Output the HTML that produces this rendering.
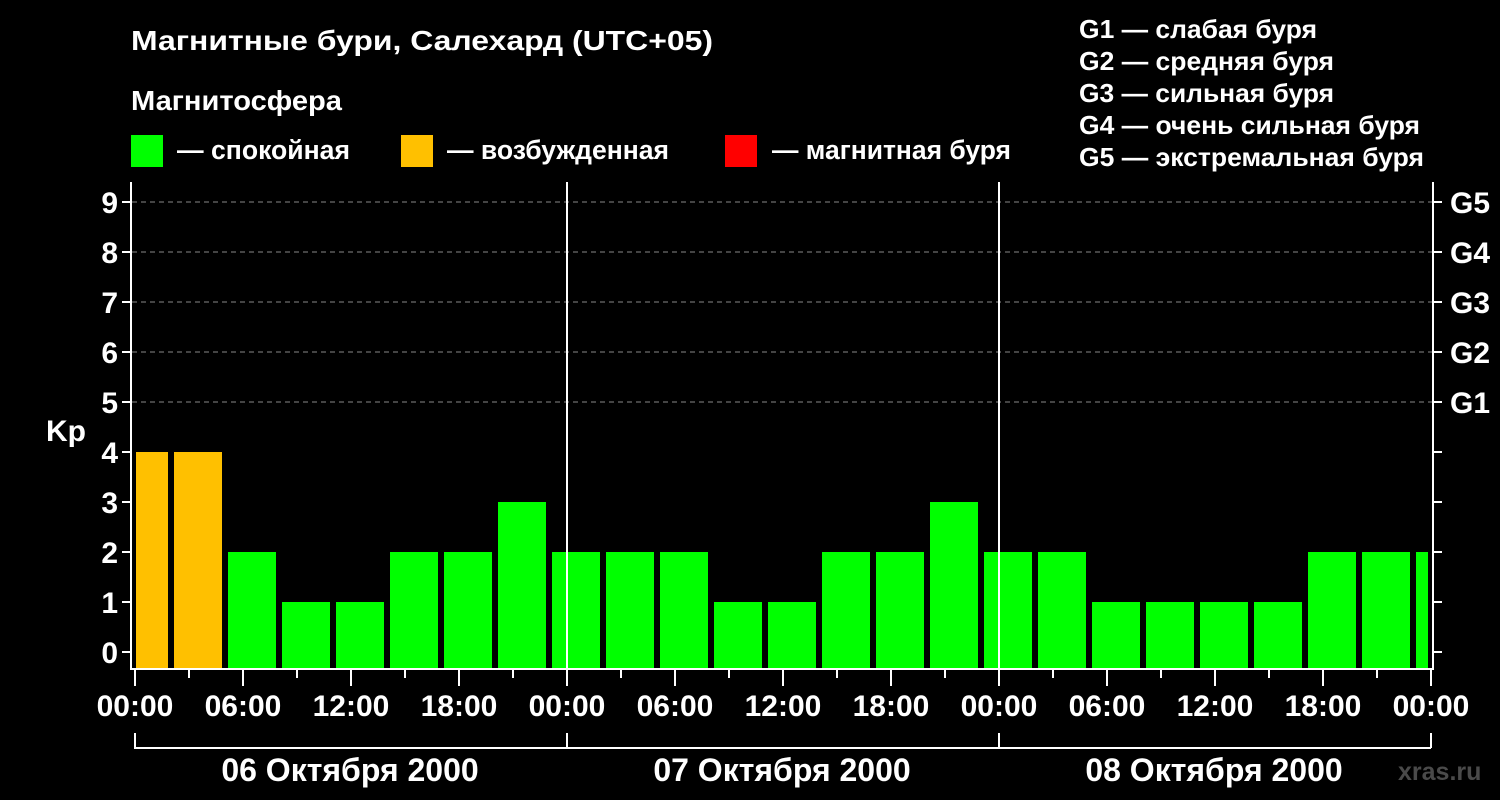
<!DOCTYPE html>
<html><head><meta charset="utf-8"><style>
html,body{margin:0;padding:0;background:#000;}
svg{display:block;font-family:"Liberation Sans",sans-serif;font-weight:bold;}
</style></head><body>
<svg width="1500" height="800" viewBox="0 0 1500 800" xmlns="http://www.w3.org/2000/svg">
<rect width="1500" height="800" fill="#000"/>
<g fill="#fff" font-size="28">
<text x="131" y="50" textLength="582" lengthAdjust="spacingAndGlyphs">Магнитные бури, Салехард (UTC+05)</text>
<text x="131" y="110" textLength="211" lengthAdjust="spacingAndGlyphs">Магнитосфера</text>
</g>
<g fill="#fff" font-size="27">
<text x="177" y="159" textLength="173" lengthAdjust="spacingAndGlyphs">— спокойная</text>
<text x="447" y="159" textLength="222" lengthAdjust="spacingAndGlyphs">— возбужденная</text>
<text x="772" y="159" textLength="239" lengthAdjust="spacingAndGlyphs">— магнитная буря</text>
</g>
<rect x="131" y="135" width="32" height="32" fill="#00ff00"/>
<rect x="401" y="135" width="32" height="32" fill="#ffc000"/>
<rect x="725" y="135" width="32" height="32" fill="#ff0000"/>
<g fill="#fff" font-size="26">
<text x="1079" y="38" textLength="238" lengthAdjust="spacingAndGlyphs">G1 — слабая буря</text>
<text x="1079" y="70" textLength="255" lengthAdjust="spacingAndGlyphs">G2 — средняя буря</text>
<text x="1079" y="102" textLength="255" lengthAdjust="spacingAndGlyphs">G3 — сильная буря</text>
<text x="1079" y="134" textLength="341" lengthAdjust="spacingAndGlyphs">G4 — очень сильная буря</text>
<text x="1079" y="166" textLength="345" lengthAdjust="spacingAndGlyphs">G5 — экстремальная буря</text>
</g>
<g stroke="#888" stroke-width="1" stroke-dasharray="5,4">
<line x1="132" x2="1432" y1="202" y2="202"/>
<line x1="132" x2="1432" y1="252" y2="252"/>
<line x1="132" x2="1432" y1="302" y2="302"/>
<line x1="132" x2="1432" y1="352" y2="352"/>
<line x1="132" x2="1432" y1="402" y2="402"/>
</g>
<g>
<rect x="136" y="452" width="32" height="216" fill="#ffc000"/>
<rect x="174" y="452" width="48" height="216" fill="#ffc000"/>
<rect x="228" y="552" width="48" height="116" fill="#00ff00"/>
<rect x="282" y="602" width="48" height="66" fill="#00ff00"/>
<rect x="336" y="602" width="48" height="66" fill="#00ff00"/>
<rect x="390" y="552" width="48" height="116" fill="#00ff00"/>
<rect x="444" y="552" width="48" height="116" fill="#00ff00"/>
<rect x="498" y="502" width="48" height="166" fill="#00ff00"/>
<rect x="552" y="552" width="48" height="116" fill="#00ff00"/>
<rect x="606" y="552" width="48" height="116" fill="#00ff00"/>
<rect x="660" y="552" width="48" height="116" fill="#00ff00"/>
<rect x="714" y="602" width="48" height="66" fill="#00ff00"/>
<rect x="768" y="602" width="48" height="66" fill="#00ff00"/>
<rect x="822" y="552" width="48" height="116" fill="#00ff00"/>
<rect x="876" y="552" width="48" height="116" fill="#00ff00"/>
<rect x="930" y="502" width="48" height="166" fill="#00ff00"/>
<rect x="984" y="552" width="48" height="116" fill="#00ff00"/>
<rect x="1038" y="552" width="48" height="116" fill="#00ff00"/>
<rect x="1092" y="602" width="48" height="66" fill="#00ff00"/>
<rect x="1146" y="602" width="48" height="66" fill="#00ff00"/>
<rect x="1200" y="602" width="48" height="66" fill="#00ff00"/>
<rect x="1254" y="602" width="48" height="66" fill="#00ff00"/>
<rect x="1308" y="552" width="48" height="116" fill="#00ff00"/>
<rect x="1362" y="552" width="48" height="116" fill="#00ff00"/>
<rect x="1416" y="552" width="12" height="116" fill="#00ff00"/>
</g>
<g stroke="#fff" stroke-width="2" fill="none">
<polyline points="131,182 131,669 1433,669 1433,182"/>
<line x1="567" y1="182" x2="567" y2="669"/>
<line x1="999" y1="182" x2="999" y2="669"/>
<path d="M122 202h9M122 252h9M122 302h9M122 352h9M122 402h9M122 452h9M122 502h9M122 552h9M122 602h9M122 652h9"/>
<path d="M1433 202h9M1433 252h9M1433 302h9M1433 352h9M1433 402h9M1433 452h9M1433 502h9M1433 552h9M1433 602h9M1433 652h9"/>
<path d="M135 670v16M189 670v8M243 670v16M297 670v8M351 670v16M405 670v8M459 670v16M513 670v8M567 670v16M621 670v8M675 670v16M729 670v8M783 670v16M837 670v8M891 670v16M945 670v8M999 670v16M1053 670v8M1107 670v16M1161 670v8M1215 670v16M1269 670v8M1323 670v16M1377 670v8M1431 670v16"/>
<path d="M135 733v15h1296M567 733v15M999 733v15M1431 733v15"/>
</g>
<g fill="#fff" font-size="30" text-anchor="end">
<text x="118" y="213">9</text><text x="118" y="263">8</text><text x="118" y="313">7</text>
<text x="118" y="363">6</text><text x="118" y="413">5</text><text x="118" y="463">4</text>
<text x="118" y="513">3</text><text x="118" y="563">2</text><text x="118" y="613">1</text>
<text x="118" y="663">0</text>
<text x="86" y="441">Kp</text>
</g>
<g fill="#fff" font-size="30">
<text x="1450" y="213">G5</text><text x="1450" y="263">G4</text><text x="1450" y="313">G3</text>
<text x="1450" y="363">G2</text><text x="1450" y="413">G1</text>
</g>
<g fill="#fff" font-size="30" text-anchor="middle">
<text x="135" y="716">00:00</text><text x="243" y="716">06:00</text><text x="351" y="716">12:00</text>
<text x="459" y="716">18:00</text><text x="567" y="716">00:00</text><text x="675" y="716">06:00</text>
<text x="783" y="716">12:00</text><text x="891" y="716">18:00</text><text x="999" y="716">00:00</text>
<text x="1107" y="716">06:00</text><text x="1215" y="716">12:00</text><text x="1323" y="716">18:00</text>
<text x="1431" y="716">00:00</text>
</g>
<g fill="#fff" font-size="32" text-anchor="middle">
<text x="350" y="781">06 Октября 2000</text>
<text x="782" y="781">07 Октября 2000</text>
<text x="1214" y="781">08 Октября 2000</text>
</g>
<text x="1398" y="780" fill="#4a4a4a" font-size="25">xras.ru</text>
</svg>
</body></html>
